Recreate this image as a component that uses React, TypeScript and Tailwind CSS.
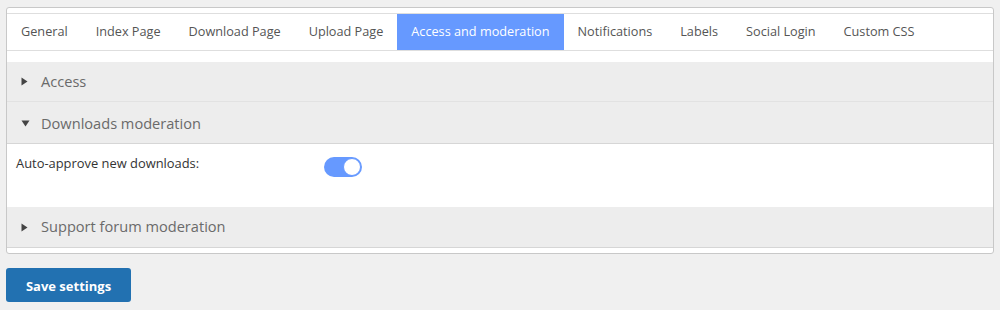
import React, { useState } from "react";

type Tab = { id: string; label: string };

const TABS: Tab[] = [
  { id: "general", label: "General" },
  { id: "index", label: "Index Page" },
  { id: "download", label: "Download Page" },
  { id: "upload", label: "Upload Page" },
  { id: "access", label: "Access and moderation" },
  { id: "notifications", label: "Notifications" },
  { id: "labels", label: "Labels" },
  { id: "social", label: "Social Login" },
  { id: "css", label: "Custom CSS" },
];

function Caret({ open }: { open: boolean }) {
  return open ? (
    <svg width="9" height="7" viewBox="0 0 9 7" className="shrink-0">
      <polygon points="0.5,0.5 8.5,0.5 4.5,6.5" fill="#444" />
    </svg>
  ) : (
    <svg width="7" height="9" viewBox="0 0 7 9" className="shrink-0">
      <polygon points="0.5,0.5 6.5,4.5 0.5,8.5" fill="#444" />
    </svg>
  );
}

function SectionHeader({
  title,
  open,
  onClick,
  className,
}: {
  title: string;
  open: boolean;
  onClick: () => void;
  className: string;
}) {
  return (
    <button
      onClick={onClick}
      className={`flex items-center w-full pl-[14px] bg-[#ededed] text-left border-b ${className}`}
    >
      <span className="w-[20px] flex items-center">
        <Caret open={open} />
      </span>
      <span className="text-[14.6px] text-[#6a6a6a]">{title}</span>
    </button>
  );
}

function Toggle({ on, onChange }: { on: boolean; onChange: (v: boolean) => void }) {
  return (
    <button
      onClick={() => onChange(!on)}
      className={`relative w-[38px] h-[20px] rounded-full transition-colors ${on ? "bg-[#6699ff]" : "bg-[#ccc]"}`}
    >
      <span
        className={`absolute top-[1px] w-[18px] h-[18px] rounded-full bg-white border border-[#6699ff] transition-all ${on ? "left-[19px]" : "left-[1px]"}`}
      />
    </button>
  );
}

export default function App() {
  const [tab, setTab] = useState("access");
  const [open, setOpen] = useState<Record<string, boolean>>({ access: false, downloads: true, forum: false });
  const [autoApprove, setAutoApprove] = useState(true);

  const toggle = (k: string) => setOpen((o) => ({ ...o, [k]: !o[k] }));

  return (
    <div className="min-h-[310px] bg-[#f0f0f0] pt-[7px] px-[6px] font-['Open_Sans',sans-serif]">
      <div className="bg-white border border-[#c8c8c8] rounded-[3px] pt-[5px]">
        {/* Tabs */}
        <div className="flex h-[38px] border-y border-[#dedede]">
          {TABS.map((t) => (
            <button
              key={t.id}
              onClick={() => setTab(t.id)}
              className={`px-[14px] text-[12.7px] whitespace-nowrap ${
                tab === t.id ? "bg-[#6699ff] text-white" : "text-[#555]"
              }`}
            >
              {t.label}
            </button>
          ))}
        </div>

        <div className="h-[11px]" />

        {/* Sections */}
        <SectionHeader
          title="Access"
          open={open.access}
          onClick={() => toggle("access")}
          className="h-[40px] border-[#e2e2e2]"
        />
        <SectionHeader
          title="Downloads moderation"
          open={open.downloads}
          onClick={() => toggle("downloads")}
          className="h-[42px] border-[#d6d6d6] pt-[2px]"
        />
        {open.downloads && (
          <div className="h-[63px] flex items-start pt-[10px] pl-[9px]">
            <div className="w-[308px] text-[12.9px] text-[#333] leading-[18px]">Auto-approve new downloads:</div>
            <div className="pt-[3px]">
              <Toggle on={autoApprove} onChange={setAutoApprove} />
            </div>
          </div>
        )}
        <SectionHeader
          title="Support forum moderation"
          open={open.forum}
          onClick={() => toggle("forum")}
          className="h-[41px] border-[#d6d6d6]"
        />
        <div className="h-[5px]" />
      </div>

      <button className="mt-[14px] w-[125px] h-[34px] pt-[3px] rounded-[3px] bg-[#2271b1] text-white text-[13px] font-bold">
        Save settings
      </button>
    </div>
  );
}
